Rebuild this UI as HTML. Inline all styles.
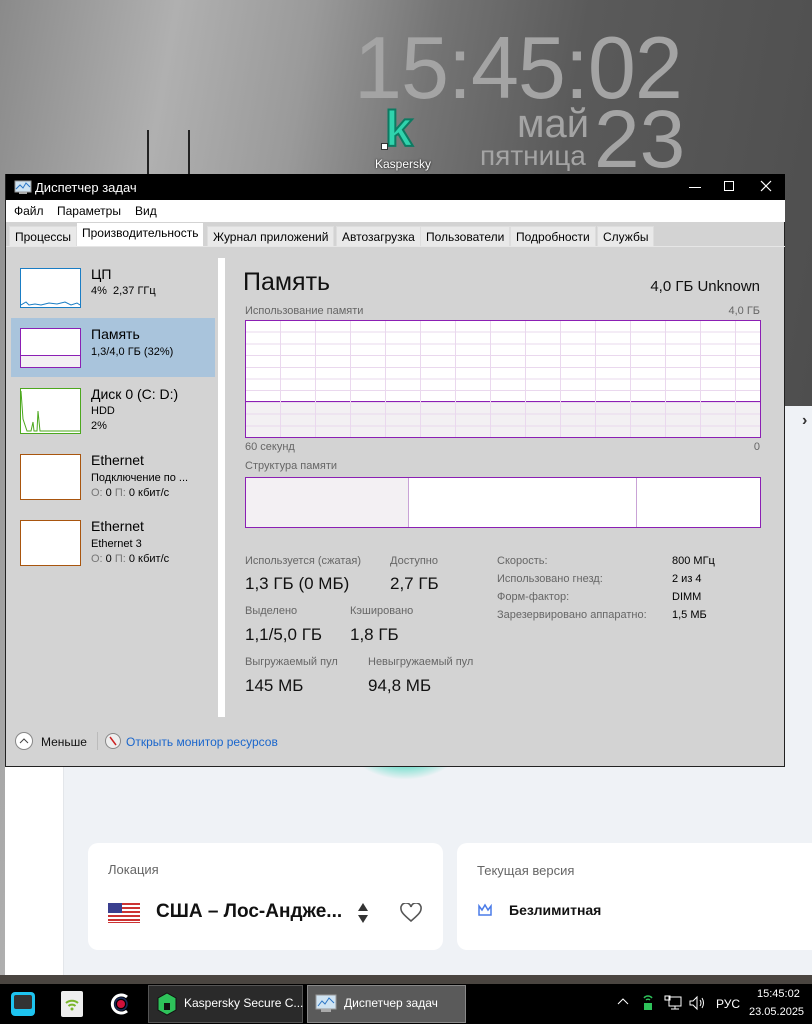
<!DOCTYPE html>
<html><head><meta charset="utf-8"><style>
*{margin:0;padding:0;box-sizing:border-box}
body{width:812px;height:1024px;overflow:hidden;position:relative;font-family:"Liberation Sans","DejaVu Sans",sans-serif;background:#777}
.abs{position:absolute}
#desk{left:0;top:0;width:812px;height:984px;background:linear-gradient(100deg,#8a8a8a 0%,#b0b0b0 18%,#9a9a9a 32%,#747474 45%,#5a5a5a 60%,#4a4a4a 100%)}
.clk{color:#a4a4a4;font-family:"Liberation Sans",sans-serif}
#win{left:5px;top:174px;width:780px;height:593px;background:#d3d3d3;border:1px solid #222;border-top:none}
#title{left:0;top:0;width:779px;height:26px;background:#000;color:#fff;font-size:13px}
#menu{left:0;top:26px;width:779px;height:22px;background:#fff;font-size:12px}
#menu span{position:absolute;top:4px}
.tab{position:absolute;top:52px;height:20px;background:#e9e9e9;font-size:12px;padding:3px 5px;color:#000;border:1px solid #ddd;border-bottom:none}
.th{position:absolute;left:14px;width:61px;background:#fff;border:1px solid}
.ln{position:absolute;left:85px;font-size:13px;color:#000}
.sm{font-size:11px;color:#000}
.lbl{position:absolute;font-size:11px;color:#666}
.val{position:absolute;font-size:17px;color:#111}
.r{position:absolute;font-size:11px}
</style></head><body>
<div id="desk" class="abs"></div>
<div class="abs" style="left:147px;top:130px;width:2px;height:50px;background:#222"></div>
<div class="abs" style="left:188px;top:130px;width:2px;height:50px;background:#222"></div>
<div class="abs clk" style="left:354px;top:26px;font-size:88px;line-height:84px;letter-spacing:-1px;transform:scaleX(0.98);transform-origin:left">15:45:02</div>
<div class="abs clk" style="left:517px;top:104px;font-size:40px;line-height:40px">май</div>
<div class="abs clk" style="left:480px;top:142px;font-size:28px;line-height:28px">пятница</div>
<div class="abs clk" style="left:594px;top:100px;font-size:82px;line-height:80px">23</div>
<div class="abs" style="left:385px;top:104px;font-size:50px;font-weight:bold;color:#2fd3ad;line-height:50px;-webkit-text-stroke:2px #0d7a62">k</div>
<div class="abs" style="left:381px;top:143px;width:7px;height:7px;background:#fff;border:1px solid #333"></div>
<div class="abs" style="left:375px;top:157px;font-size:12px;color:#fff;text-shadow:0 0 2px #000">Kaspersky</div>

<div class="abs" style="left:784px;top:406px;width:28px;height:569px;background:#eff2f6"></div>
<div class="abs" style="left:802px;top:412px;font-size:16px;color:#333;font-weight:bold">›</div>
<div class="abs" style="left:5px;top:766px;width:807px;height:209px;background:#eff2f6"></div>
<div class="abs" style="left:5px;top:766px;width:59px;height:209px;background:#fff;border-right:1px solid #e3e6ea"></div>
<div class="abs" style="left:345px;top:740px;width:120px;height:40px;border-radius:0 0 60px 60px;background:radial-gradient(ellipse at 50% 0,#2fd3b5 30%,rgba(47,211,181,0) 70%)"></div>
<div class="abs" style="left:88px;top:843px;width:355px;height:107px;background:#fff;border-radius:10px"></div>
<div class="abs" style="left:108px;top:862px;font-size:13px;color:#666">Локация</div>
<svg class="abs" style="left:108px;top:903px" width="32" height="20"><rect width="32" height="20" fill="#fff"/><g fill="#c33"><rect y="0" width="32" height="2"/><rect y="4" width="32" height="2"/><rect y="8" width="32" height="2"/><rect y="12" width="32" height="2"/><rect y="16" width="32" height="2"/><rect y="19" width="32" height="1"/></g><rect width="14" height="10" fill="#3a3f8f"/></svg>
<div class="abs" style="left:156px;top:901px;font-size:19px;font-weight:bold;color:#111">США – Лос-Андже...</div>
<svg class="abs" style="left:356px;top:902px" width="14" height="22"><path d="M7 1L12 9H2Z M7 21L12 13H2Z" fill="#333"/></svg>
<svg class="abs" style="left:400px;top:903px" width="22" height="20"><path d="M11 18C4 12 1 9 1 6A5 5 0 0 1 11 4A5 5 0 0 1 21 6C21 9 18 12 11 18Z" fill="none" stroke="#555" stroke-width="1.6"/></svg>
<div class="abs" style="left:457px;top:843px;width:355px;height:107px;background:#fff;border-radius:10px 0 0 10px"></div>
<div class="abs" style="left:477px;top:863px;font-size:13px;color:#666">Текущая версия</div>
<svg class="abs" style="left:477px;top:903px" width="16" height="14"><path d="M2 3L5 7L8 2L11 7L14 3V12H2Z" fill="none" stroke="#4a7be8" stroke-width="1.5"/></svg>
<div class="abs" style="left:509px;top:902px;font-size:14px;font-weight:bold;color:#111">Безлимитная</div>
<div class="abs" style="left:0;top:975px;width:812px;height:9px;background:#4a4540"></div>

<div id="win" class="abs">
<div id="title" class="abs">
<svg class="abs" style="left:8px;top:6px" width="18" height="15"><rect x="1" y="1" width="16" height="11" fill="#cfe3f2" stroke="#999"/><path d="M2 9L6 5L9 8L12 3L16 7" stroke="#2a74c4" fill="none"/><rect x="5" y="12" width="8" height="2" fill="#aaa"/></svg>
<span class="abs" style="left:29px;top:6px">Диспетчер задач</span>
<div class="abs" style="left:683px;top:13px;width:12px;height:1px;background:#fff"></div>
<div class="abs" style="left:718px;top:7px;width:10px;height:10px;border:1px solid #fff"></div>
<svg class="abs" style="left:754px;top:6px" width="12" height="12"><path d="M1 1L11 11M11 1L1 11" stroke="#fff" stroke-width="1.2"/></svg>
</div>
<div id="menu" class="abs"><span style="left:8px">Файл</span><span style="left:51px">Параметры</span><span style="left:129px">Вид</span></div>
<div class="tab" style="left:3px">Процессы</div>
<div class="tab" style="left:71px;top:49px;height:24px;background:#fff;border:none">Производительность</div>
<div class="tab" style="left:201px">Журнал приложений</div>
<div class="tab" style="left:330px">Автозагрузка</div>
<div class="tab" style="left:414px">Пользователи</div>
<div class="tab" style="left:504px">Подробности</div>
<div class="tab" style="left:591px">Службы</div>
<div class="abs" style="left:0;top:72px;width:779px;height:1px;background:#e6e6e6"></div>

<div class="abs" style="left:212px;top:84px;width:7px;height:459px;background:#fff"></div>
<div class="abs" style="left:5px;top:144px;width:204px;height:59px;background:#a9c4dc"></div>
<div class="th" style="top:94px;height:40px;border-color:#1a7dc4"><svg width="59" height="38" style="position:absolute;left:0;top:0"><path d="M0 36L5 33L8 36L14 35L20 36L28 34L36 35L44 33L50 36L56 34L59 36" stroke="#1a7dc4" fill="none"/></svg></div>
<div class="ln" style="top:92px;font-size:14px">ЦП</div><div class="ln sm" style="top:111px">4%&nbsp; 2,37 ГГц</div>
<div class="th" style="top:154px;height:40px;border-color:#8b1fb4;background:linear-gradient(#fff 0,#fff 26px,#8b1fb4 26px,#8b1fb4 27px,#f3f0f3 27px)"></div>
<div class="ln" style="top:152px;font-size:14px">Память</div><div class="ln sm" style="top:172px">1,3/4,0 ГБ (32%)</div>
<div class="th" style="top:214px;height:46px;border-color:#4ca81e"><svg width="59" height="44" style="position:absolute;left:0;top:0"><path d="M0 2L2 30L6 42L10 42L12 33L13 42L16 42L17 22L19 42L59 42" stroke="#4ca81e" fill="none"/></svg></div>
<div class="ln" style="top:212px;font-size:14px">Диск 0 (C: D:)</div><div class="ln sm" style="top:231px">HDD</div><div class="ln sm" style="top:246px">2%</div>
<div class="th" style="top:280px;height:46px;border-color:#a8550e"></div>
<div class="ln" style="top:278px;font-size:14px">Ethernet</div><div class="ln sm" style="top:298px">Подключение по ...</div><div class="ln sm" style="top:313px"><span style="color:#777">О:</span> 0 <span style="color:#777">П:</span> 0 кбит/с</div>
<div class="th" style="top:346px;height:46px;border-color:#a8550e"></div>
<div class="ln" style="top:344px;font-size:14px">Ethernet</div><div class="ln sm" style="top:364px">Ethernet 3</div><div class="ln sm" style="top:379px"><span style="color:#777">О:</span> 0 <span style="color:#777">П:</span> 0 кбит/с</div>

<div class="abs" style="left:237px;top:94px;font-size:25px;color:#111">Память</div>
<div class="abs" style="right:24px;top:104px;font-size:15px;color:#111">4,0 ГБ Unknown</div>
<div class="lbl" style="left:239px;top:131px">Использование памяти</div>
<div class="lbl" style="right:24px;top:131px">4,0 ГБ</div>
<div class="abs" style="left:239px;top:146px;width:516px;height:118px;border:1px solid #8b1fb4;background:
repeating-linear-gradient(90deg,transparent 0,transparent 34px,#ead8ee 34px,#ead8ee 35px),
repeating-linear-gradient(0deg,transparent 0,transparent 10.7px,#ead8ee 10.7px,#ead8ee 11.7px),
linear-gradient(#fff 0,#fff 80px,#8b1fb4 80px,#8b1fb4 81px,#f3f0f3 81px)"></div>
<div class="lbl" style="left:239px;top:267px">60 секунд</div>
<div class="lbl" style="right:24px;top:267px">0</div>
<div class="lbl" style="left:239px;top:286px">Структура памяти</div>
<div class="abs" style="left:239px;top:303px;width:516px;height:51px;border:1px solid #8b1fb4;background:#fff">
<div class="abs" style="left:0;top:0;width:163px;height:49px;background:#f3f0f3;border-right:1px solid #c9a3d6"></div>
<div class="abs" style="left:390px;top:0;width:1px;height:49px;background:#c9a3d6"></div></div>
<div class="lbl" style="left:239px;top:381px">Используется (сжатая)</div>
<div class="lbl" style="left:384px;top:381px">Доступно</div>
<div class="val" style="left:239px;top:400px">1,3 ГБ (0 МБ)</div>
<div class="val" style="left:384px;top:400px">2,7 ГБ</div>
<div class="lbl" style="left:239px;top:431px">Выделено</div>
<div class="lbl" style="left:344px;top:431px">Кэшировано</div>
<div class="val" style="left:239px;top:451px">1,1/5,0 ГБ</div>
<div class="val" style="left:344px;top:451px">1,8 ГБ</div>
<div class="lbl" style="left:239px;top:482px">Выгружаемый пул</div>
<div class="lbl" style="left:362px;top:482px">Невыгружаемый пул</div>
<div class="val" style="left:239px;top:502px">145 МБ</div>
<div class="val" style="left:362px;top:502px">94,8 МБ</div>
<div class="r" style="left:491px;top:381px;color:#666">Скорость:</div><div class="r" style="left:666px;top:381px">800 МГц</div>
<div class="r" style="left:491px;top:399px;color:#666">Использовано гнезд:</div><div class="r" style="left:666px;top:399px">2 из 4</div>
<div class="r" style="left:491px;top:417px;color:#666">Форм-фактор:</div><div class="r" style="left:666px;top:417px">DIMM</div>
<div class="r" style="left:491px;top:435px;color:#666">Зарезервировано аппаратно:</div><div class="r" style="left:666px;top:435px">1,5 МБ</div>

<div class="abs" style="left:9px;top:558px;width:18px;height:18px;border-radius:50%;background:#fff;border:1px solid #888"><svg width="16" height="16" style="position:absolute;left:0;top:0"><path d="M4 10L8 6L12 10" stroke="#444" fill="none"/></svg></div>
<div class="abs" style="left:35px;top:561px;font-size:12px;color:#111">Меньше</div>
<div class="abs" style="left:91px;top:558px;width:1px;height:18px;background:#bbb"></div>
<div class="abs" style="left:99px;top:559px;width:16px;height:16px;border-radius:50%;background:#eee;border:1px solid #888"><svg width="14" height="14" style="position:absolute;left:0;top:0"><path d="M4 3L10 11" stroke="#c22" stroke-width="1.5"/></svg></div>
<div class="abs" style="left:120px;top:561px;font-size:12px;color:#1a66cc">Открыть монитор ресурсов</div>
</div>

<div class="abs" style="left:0;top:984px;width:812px;height:40px;background:#000"></div>
<div class="abs" style="left:11px;top:992px;width:24px;height:24px;border-radius:4px;background:#1ec4f0"><div style="position:absolute;left:3px;top:3px;width:18px;height:14px;background:#333;border-radius:2px"></div></div>
<div class="abs" style="left:61px;top:991px;width:22px;height:26px;background:#eee;border-radius:2px"><svg width="22" height="26"><path d="M5 12A9 9 0 0 1 17 12M7.5 15A5 5 0 0 1 14.5 15" stroke="#7ab52a" stroke-width="2" fill="none"/><circle cx="11" cy="18" r="1.5" fill="#7ab52a"/></svg></div>
<svg class="abs" style="left:108px;top:991px" width="24" height="26"><path d="M19 6A9 9 0 1 0 19 20" stroke="#fff" stroke-width="3" fill="none"/><circle cx="13" cy="13" r="4" fill="#d0103a"/><circle cx="13" cy="13" r="6" stroke="#1a2a5a" stroke-width="1.5" fill="none"/></svg>
<div class="abs" style="left:148px;top:985px;width:155px;height:38px;background:#2a2a2a;border:1px solid #555"></div>
<svg class="abs" style="left:157px;top:992px" width="20" height="24"><path d="M10 1L19 6V18L10 23L1 18V6Z" fill="#2ec25a" stroke="#111"/><rect x="7" y="11" width="6" height="7" fill="#111"/></svg>
<div class="abs" style="left:184px;top:996px;font-size:12px;color:#fff">Kaspersky Secure C...</div>
<div class="abs" style="left:307px;top:985px;width:159px;height:38px;background:#5a5a5a;border:1px solid #888"></div>
<svg class="abs" style="left:315px;top:994px" width="22" height="20"><rect x="1" y="1" width="20" height="14" fill="#cfe3f2" stroke="#999"/><path d="M3 12L7 7L10 10L14 4L19 9" stroke="#2a74c4" fill="none"/><rect x="6" y="15" width="10" height="3" fill="#aaa"/></svg>
<div class="abs" style="left:344px;top:996px;font-size:12px;color:#fff">Диспетчер задач</div>
<svg class="abs" style="left:617px;top:996px" width="12" height="10"><path d="M1 8L6 3L11 8" stroke="#fff" fill="none"/></svg>
<svg class="abs" style="left:642px;top:993px" width="12" height="18"><path d="M2 5A5 5 0 0 1 10 5M4 7A3 3 0 0 1 8 7" stroke="#2ec25a" fill="none" stroke-width="1.5"/><rect x="2" y="10" width="8" height="7" fill="#2ec25a"/></svg>
<svg class="abs" style="left:664px;top:995px" width="18" height="16"><rect x="5" y="2" width="12" height="9" fill="none" stroke="#fff"/><rect x="1" y="1" width="5" height="4" fill="none" stroke="#fff"/><path d="M11 11V14M7 14H15" stroke="#fff"/></svg>
<svg class="abs" style="left:688px;top:995px" width="18" height="16"><path d="M2 6H5L9 2V14L5 10H2Z" fill="none" stroke="#fff"/><path d="M12 5Q14 8 12 11M14 3Q17 8 14 13" stroke="#fff" fill="none"/></svg>
<div class="abs" style="left:716px;top:997px;font-size:12px;color:#fff">РУС</div>
<div class="abs" style="left:757px;top:988px;font-size:11px;color:#fff">15:45:02</div>
<div class="abs" style="left:749px;top:1006px;font-size:11px;color:#fff">23.05.2025</div>
</body></html>
